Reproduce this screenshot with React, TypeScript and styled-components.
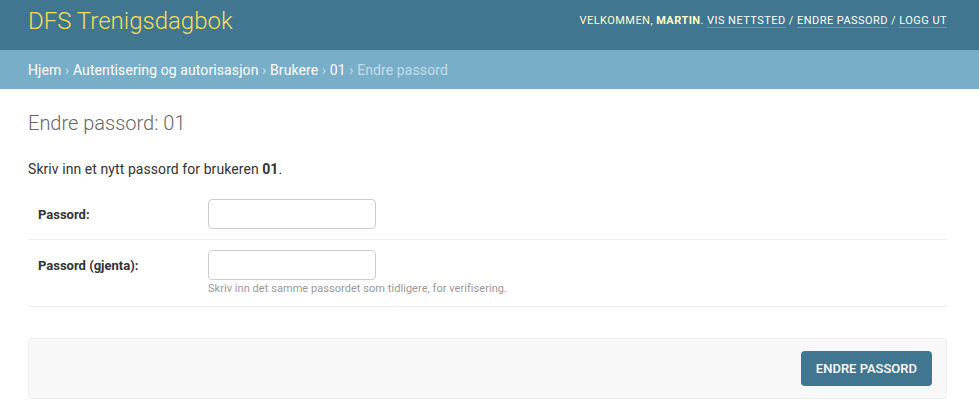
import React from "react";
import styled, { createGlobalStyle } from "styled-components";

const Global = createGlobalStyle`
  html, body { margin: 0; padding: 0; background: #fff; }
  body { font-family: Roboto, "Lucida Grande", "DejaVu Sans", sans-serif; font-size: 14px; color: #333; }
  * { box-sizing: border-box; }
`;

const Header = styled.header`
  height: 50px;
  background: #417690;
  display: flex;
  justify-content: space-between;
  align-items: flex-start;
  padding: 0 32px 0 28px;
`;

const Branding = styled.h1`
  margin: 6px 0 0;
  font-size: 24px;
  line-height: 30px;
  font-weight: 300;
  color: #f5dd5d;
`;

const UserTools = styled.div`
  margin-top: 14px;
  font-size: 11px;
  line-height: 14px;
  letter-spacing: 0.45px;
  text-transform: uppercase;
  color: #ffc;
`;

const ToolLink = styled.a`
  color: #fff;
  text-decoration: none;
  border-bottom: 1px solid rgba(255, 255, 255, 0.25);
`;

const Crumbs = styled.nav`
  background: #79aec8;
  padding: 11px 32px 10px 28px;
  font-size: 14px;
  line-height: 18px;
  letter-spacing: 0.1px;
  color: #c4dce8;
`;

const CrumbLink = styled.a`
  color: #fff;
  text-decoration: none;
`;

const Content = styled.main`
  padding: 22px 32px 20px 28px;
`;

const Title = styled.h1`
  margin: 0 0 25px;
  font-size: 20px;
  line-height: 24px;
  font-weight: 300;
  color: #666;
`;

const Intro = styled.p`
  margin: 0 0 11px;
  font-size: 14px;
  line-height: 18px;
  letter-spacing: 0.07px;
  color: #333;
`;

const Fieldset = styled.fieldset`
  margin: 0;
  padding: 0;
  border: none;
`;

const Row = styled.div`
  display: flex;
  padding: 10px;
  border-bottom: 1px solid #eee;
`;

const Label = styled.label`
  width: 170px;
  flex: none;
  padding: 7px 10px 0 0;
  font-size: 13px;
  line-height: 18px;
  font-weight: bold;
  color: #333;
`;

const Field = styled.div`
  display: flex;
  flex-direction: column;
`;

const Input = styled.input`
  width: 168px;
  height: 30px;
  padding: 5px 6px;
  border: 1px solid #ccc;
  border-radius: 4px;
  font-family: inherit;
  font-size: 13px;
  color: #333;
  outline: none;
`;

const Help = styled.div`
  margin-top: 2px;
  font-size: 11px;
  line-height: 14px;
  letter-spacing: 0.05px;
  color: #999;
`;

const SubmitRow = styled.div`
  margin-top: 31px;
  display: flex;
  justify-content: flex-end;
  padding: 12px 14px;
  background: #f8f8f8;
  border: 1px solid #eee;
  border-radius: 4px;
`;

const Submit = styled.button`
  height: 35px;
  padding: 0 15px;
  border: none;
  border-radius: 4px;
  background: #417690;
  color: #fff;
  font-family: inherit;
  font-size: 13px;
  font-weight: 500;
  line-height: 15px;
  text-transform: uppercase;
  cursor: pointer;
`;

const Sep = () => <span> › </span>;

export default function App() {
  return (
    <>
      <Global />
      <Header>
        <Branding>DFS Trenigsdagbok</Branding>
        <UserTools>
          Velkommen, <strong>Martin</strong>. <ToolLink href="#">Vis nettsted</ToolLink> /{" "}
          <ToolLink href="#">Endre passord</ToolLink> / <ToolLink href="#">Logg ut</ToolLink>
        </UserTools>
      </Header>
      <Crumbs>
        <CrumbLink href="#">Hjem</CrumbLink>
        <Sep />
        <CrumbLink href="#">Autentisering og autorisasjon</CrumbLink>
        <Sep />
        <CrumbLink href="#">Brukere</CrumbLink>
        <Sep />
        <CrumbLink href="#">01</CrumbLink>
        <Sep />
        Endre passord
      </Crumbs>
      <Content>
        <Title>Endre passord: 01</Title>
        <Intro>
          Skriv inn et nytt passord for brukeren <strong>01</strong>.
        </Intro>
        <Fieldset>
          <Row>
            <Label htmlFor="p1">Passord:</Label>
            <Field>
              <Input id="p1" type="password" />
            </Field>
          </Row>
          <Row>
            <Label htmlFor="p2">Passord (gjenta):</Label>
            <Field>
              <Input id="p2" type="password" />
              <Help>Skriv inn det samme passordet som tidligere, for verifisering.</Help>
            </Field>
          </Row>
        </Fieldset>
        <SubmitRow>
          <Submit type="submit">Endre passord</Submit>
        </SubmitRow>
      </Content>
    </>
  );
}
